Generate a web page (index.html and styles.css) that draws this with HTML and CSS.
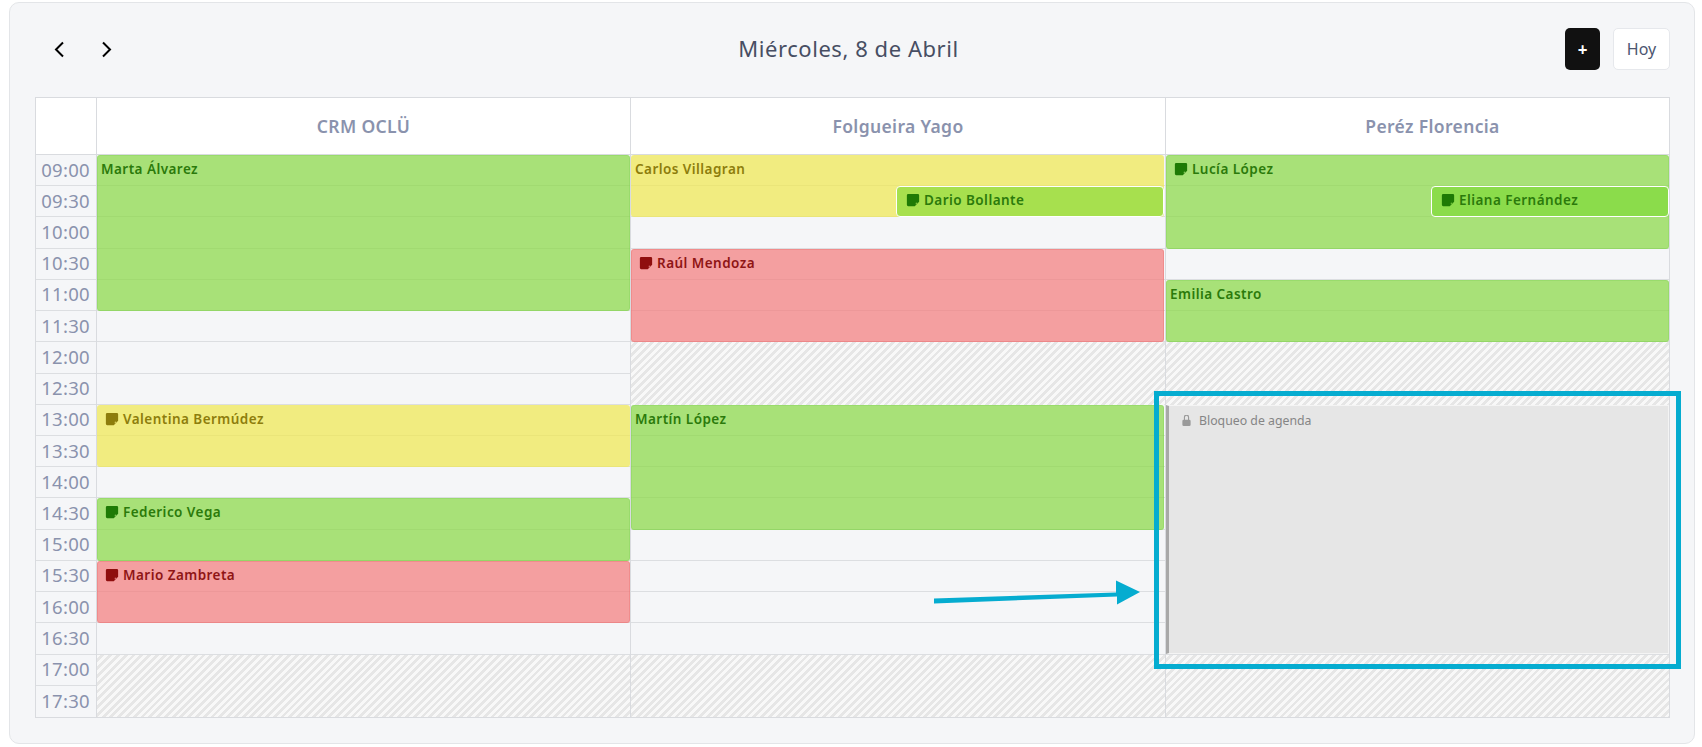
FILE: index.html
```html
<!DOCTYPE html>
<html lang="es">
<head>
<meta charset="utf-8">
<title>Agenda</title>
<link rel="stylesheet" href="styles.css">
</head>
<body>
<svg class="defs" width="0" height="0" aria-hidden="true">
  <symbol id="sticky" viewBox="0 0 16 16"><path fill="currentColor" d="M2.5 1A1.5 1.5 0 0 0 1 2.5v11A1.5 1.5 0 0 0 2.5 15h7.500L15 10V2.500A1.500 1.500 0 0 0 13.500 1h-11zm8.700 10.200h1.800l-1.800 1.800v-1.800z" fill-rule="evenodd"/></symbol>
</svg>
<main class="card">
  <header class="toolbar">
    <nav class="nav">
      <button class="chev" aria-label="Anterior"><svg width="11" height="17" viewBox="0 0 11 17"><path d="M9 1.5 2 8.5l7 7" fill="none" stroke="#000" stroke-width="2"/></svg></button>
      <button class="chev" aria-label="Siguiente"><svg width="11" height="17" viewBox="0 0 11 17"><path d="M2 1.5l7 7-7 7" fill="none" stroke="#000" stroke-width="2"/></svg></button>
    </nav>
    <h1 class="title">Miércoles, 8 de Abril</h1>
    <div class="actions">
      <button class="btn-add">+</button>
      <button class="btn-today">Hoy</button>
    </div>
  </header>

  <section class="cal">
    <div class="head corner"></div>
    <div class="head">CRM OCLÜ</div>
    <div class="head">Folgueira Yago</div>
    <div class="head last">Peréz Florencia</div>

    <div class="times">
      <div>09:00</div><div>09:30</div><div>10:00</div><div>10:30</div><div>11:00</div><div>11:30</div>
      <div>12:00</div><div>12:30</div><div>13:00</div><div>13:30</div><div>14:00</div><div>14:30</div>
      <div>15:00</div><div>15:30</div><div>16:00</div><div>16:30</div><div>17:00</div><div>17:30</div>
    </div>

    <div class="col">
      <div class="slots"><i></i><i></i><i></i><i></i><i></i><i></i><i></i><i></i><i></i><i></i><i></i><i></i><i></i><i></i><i></i><i></i><i></i><i></i></div>
      <div class="layer">
        <div class="ev green at-0 len-5">Marta Álvarez</div>
        <div class="ev yellow at-8 len-2"><svg class="note"><use href="#sticky"/></svg>Valentina Bermúdez</div>
        <div class="ev green at-11 len-2"><svg class="note"><use href="#sticky"/></svg>Federico Vega</div>
        <div class="ev red at-13 len-2"><svg class="note"><use href="#sticky"/></svg>Mario Zambreta</div>
        <div class="hatch at-16 len-2"></div>
      </div>
    </div>

    <div class="col mid">
      <div class="slots"><i></i><i></i><i></i><i></i><i></i><i></i><i></i><i></i><i></i><i></i><i></i><i></i><i></i><i></i><i></i><i></i><i></i><i></i></div>
      <div class="layer">
        <div class="ev yellow at-0 len-2">Carlos Villagran</div>
        <div class="ev half lime at-1 len-1"><svg class="note"><use href="#sticky"/></svg>Dario Bollante</div>
        <div class="ev red at-3 len-3"><svg class="note"><use href="#sticky"/></svg>Raúl Mendoza</div>
        <div class="hatch at-6 len-2"></div>
        <div class="ev green at-8 len-4">Martín López</div>
        <div class="hatch at-16 len-2"></div>
      </div>
    </div>

    <div class="col last">
      <div class="slots"><i></i><i></i><i></i><i></i><i></i><i></i><i></i><i></i><i></i><i></i><i></i><i></i><i></i><i></i><i></i><i></i><i></i><i></i></div>
      <div class="layer">
        <div class="ev green at-0 len-3"><svg class="note"><use href="#sticky"/></svg>Lucía López</div>
        <div class="ev half vivid at-1 len-1"><svg class="note"><use href="#sticky"/></svg>Eliana Fernández</div>
        <div class="ev green at-4 len-2">Emilia Castro</div>
        <div class="hatch at-6 len-2"></div>
        <div class="lock at-8 len-8">
          <svg class="lock-ic" viewBox="0 0 16 16"><path fill="currentColor" d="M8 1a2.2 2.2 0 0 1 2.2 2.2V7H5.800V3.200A2.200 2.200 0 0 1 8 1zm3.800 6V3.200a3.800 3.800 0 0 0-7.600 0V7A2 2 0 0 0 2 9v5a2 2 0 0 0 2 2h8a2 2 0 0 0 2-2V9a2 2 0 0 0-2-2z"/></svg>Bloqueo de agenda
        </div>
        <div class="hatch at-16 len-2"></div>
      </div>
    </div>
  </section>

  <div class="mark-box"></div>
  <svg class="mark-arrow" width="210" height="28" viewBox="0 0 210 28"><path d="M0 18.500 182 12.500V0.500L206 12 183 24.500V16.500L0 23.500z" fill="#05acd0"/></svg>
</main>
</body>
</html>
```
FILE: styles.css
```css
* { box-sizing: border-box; }
html, body { margin: 0; padding: 0; background: #fff; }
body {
  font-family: "Noto Sans", "Lato", sans-serif;
  padding: 2px 7px 3px 9px;
  height: 747px;
  overflow: hidden;
}
.defs { display: block; width: 0; height: 0; }
.card {
  position: relative;
  height: 742px;
  background: #f5f6f8;
  border: 1px solid #e3e5e8;
  border-radius: 10px;
  padding: 25px 24px 25px 25px;
  display: flex;
  flex-direction: column;
  gap: 27px;
}
.toolbar {
  display: grid;
  grid-template-columns: 1fr auto 1fr;
  align-items: center;
  height: 42px;
}
.nav { display: flex; gap: 36px; padding-left: 19px; }
.chev {
  width: 11px; height: 17px; padding: 0; border: 0; background: none;
  display: flex;
}
.title {
  margin: 0;
  font-size: 22px;
  font-weight: 400;
  letter-spacing: .55px;
  color: #474e63;
  position: relative;
  left: -4px;
  top: -1px;
}
.actions { display: flex; justify-content: flex-end; gap: 13px; }
.btn-add {
  width: 35px; height: 42px; border: 0; border-radius: 5px;
  background: #111;
  color: #fff;
  font: 700 17px "Noto Sans", sans-serif;
  padding: 0;
}
.btn-today {
  width: 57px; height: 42px;
  border: 1px solid #e6e8ec;
  border-radius: 5px;
  background: #fff;
  color: #4c5670;
  font: 400 16px "Noto Sans", sans-serif;
  padding: 0;
}
.cal {
  flex: 1;
  display: grid;
  grid-template-columns: 61px 534px 535px 1fr;
  grid-template-rows: 57px 1fr;
  border: 1px solid #d9dbdf;
  min-height: 0;
}
.head {
  background: #fff;
  border-right: 1px solid #d9dbdf;
  border-bottom: 1px solid #d9dbdf;
  display: flex;
  align-items: center;
  justify-content: center;
  font-size: 17.500px;
  font-weight: 600;
  letter-spacing: .35px;
  color: #8a92ad;
}
.head.last { border-right: 0; padding-left: 30px; }
.times {
  display: grid;
  grid-template-rows: repeat(18, 1fr);
  border-right: 1px solid #d9dbdf;
}
.times div {
  display: flex;
  align-items: center;
  justify-content: flex-end;
  padding: 0 6px 2px 0;
  font-size: 18.500px;
  letter-spacing: .3px;
  color: #8a92ad;
  border-bottom: 1px solid #dcdee1;
}
.times div:last-child { border-bottom: 0; }
.col {
  display: grid;
  grid-template: 1fr / 1fr;
  border-right: 1px solid #d9dbdf;
  min-width: 0;
}
.col.last { border-right: 0; }
.slots, .layer {
  grid-area: 1 / 1;
  display: grid;
  grid-template-rows: repeat(18, 1fr);
  grid-template-columns: 1fr;
  min-height: 0;
  min-width: 0;
}
.slots i { display: block; border-bottom: 1px solid #dcdee1; }
.slots i:last-child { border-bottom: 0; }

.at-0 { grid-row-start: 1; }
.at-1 { grid-row-start: 2; }
.at-3 { grid-row-start: 4; }
.at-4 { grid-row-start: 5; }
.at-6 { grid-row-start: 7; }
.at-8 { grid-row-start: 9; }
.at-11 { grid-row-start: 12; }
.at-13 { grid-row-start: 14; }
.at-16 { grid-row-start: 17; }
.len-1 { grid-row-end: span 1; }
.len-2 { grid-row-end: span 2; }
.len-3 { grid-row-end: span 3; }
.len-4 { grid-row-end: span 4; }
.len-5 { grid-row-end: span 5; }
.len-8 { grid-row-end: span 8; }

.ev, .hatch, .lock { grid-column: 1; min-width: 0; }
.ev {
  border-radius: 3px;
  margin: 0;
  padding: 4px 3px 0;
  font-size: 13.500px;
  font-weight: 600;
  line-height: 18px;
  letter-spacing: .45px;
  white-space: nowrap;
  display: flex;
  align-items: flex-start;
  border: 1px solid transparent;
}
.mid .ev { margin-right: 1px; }
.green { background: rgba(136, 217, 65, .7); color: #2b7a0b; border-color: rgba(120, 205, 80, .3); }
.yellow { background: rgba(239, 232, 77, .7); color: #8d7d0c; }
.red { background: rgba(244, 123, 122, .7); color: #8f1515; border-color: rgba(235, 110, 110, .4); }
.half {
  width: 268px;
  justify-self: end;
  border: 1px solid #fff;
  border-radius: 4px;
  z-index: 1;
}
.lime { background: #a7e04e; color: #2b7a0b; }
.vivid { background: #8bdc4b; color: #2b7a0b; width: 238px; }
.note { width: 14px; height: 14px; margin: 2px 4px 0 4px; flex: none; }
.half .note { margin-left: 6px; }
.green .note, .lime .note, .vivid .note { color: #1e7a05; }
.yellow .note { color: #8d7d0c; }
.red .note { color: #8f0e0e; }

.hatch {
  background: repeating-linear-gradient(135deg, #f8f8f8 0 2.750px, #e6e6e6 2.750px 5.500px);
}
.lock {
  background: #e6e6e6;
  border: 1px solid #f4f4f4;
  border-left: 3px solid #a8a8a8;
  padding: 6px 0 0 12px;
  font-size: 12.300px;
  line-height: 18px;
  color: #858585;
  display: flex;
  align-items: flex-start;
  margin-bottom: 1px;
}
.lock-ic { width: 11px; height: 11px; margin: 3px 7px 0 0; color: #9a9a9a; flex: none; }

.mark-box {
  position: absolute;
  left: 1144px;
  top: 388px;
  width: 527px;
  height: 278px;
  border: 5px solid #05acd0;
}
.mark-arrow {
  position: absolute;
  left: 924px;
  top: 577px;
}
```
